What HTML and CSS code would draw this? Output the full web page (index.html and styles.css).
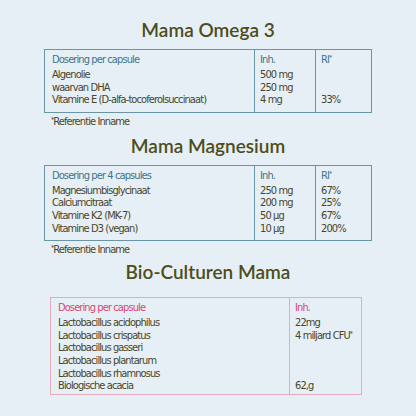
FILE: index.html
```html
<!DOCTYPE html>
<html lang="nl">
<head>
<meta charset="utf-8">
<link rel="stylesheet" href="styles.css">
</head>
<body>
<main class="page">
  <section class="block">
    <h2 class="title t1">Mama Omega 3</h2>
    <table class="facts blue w1">
      <colgroup><col class="k1"><col class="k2"><col></colgroup>
      <tr class="head"><td>Dosering per capsule</td><td>Inh.</td><td>RI<sup>*</sup></td></tr>
      <tr class="first"><td>Algenolie</td><td>500 mg</td><td></td></tr>
      <tr><td>waarvan DHA</td><td>250 mg</td><td></td></tr>
      <tr class="last"><td>Vitamine E (D-alfa-tocoferolsuccinaat)</td><td>4 mg</td><td>33%</td></tr>
    </table>
    <p class="note"><sup>*</sup>Referentie Inname</p>
  </section>
  <section class="block">
    <h2 class="title t2">Mama Magnesium</h2>
    <table class="facts blue w1">
      <colgroup><col class="k1"><col class="k2"><col></colgroup>
      <tr class="head"><td>Dosering per 4 capsules</td><td>Inh.</td><td>RI<sup>*</sup></td></tr>
      <tr class="first"><td>Magnesiumbisglycinaat</td><td>250 mg</td><td>67%</td></tr>
      <tr><td>Calciumcitraat</td><td>200 mg</td><td>25%</td></tr>
      <tr><td>Vitamine K2 (MK-7)</td><td>50 µg</td><td>67%</td></tr>
      <tr class="last"><td>Vitamine D3 (vegan)</td><td>10 µg</td><td>200%</td></tr>
    </table>
    <p class="note"><sup>*</sup>Referentie Inname</p>
  </section>
  <section class="block">
    <h2 class="title t3">Bio-Culturen Mama</h2>
    <table class="facts pink w3">
      <colgroup><col class="k3"><col></colgroup>
      <tr class="head"><td>Dosering per capsule</td><td>Inh.</td></tr>
      <tr class="first"><td>Lactobacillus acidophilus</td><td>22mg</td></tr>
      <tr><td>Lactobacillus crispatus</td><td>4 miljard CFU<sup>*</sup></td></tr>
      <tr><td>Lactobacillus gasseri</td><td></td></tr>
      <tr><td>Lactobacillus plantarum</td><td></td></tr>
      <tr><td>Lactobacillus rhamnosus</td><td></td></tr>
      <tr class="last"><td>Biologische acacia</td><td>62,g</td></tr>
    </table>
  </section>
</main>
</body>
</html>
```
FILE: styles.css
```css
html, body {
  margin: 0;
  padding: 0;
}
body {
  width: 416px;
  height: 416px;
  overflow: hidden;
  background: #e6eff6;
}
.page {
  display: flex;
  flex-direction: column;
}
.block {
  display: flex;
  flex-direction: column;
}
.title {
  margin: 0;
  text-align: center;
  font-family: "Lato", "Open Sans", sans-serif;
  font-weight: 600;
  font-size: 19px;
  line-height: 20px;
  color: #4d4d1c;
}
.t1 { margin-top: 20px; margin-bottom: 9px; }
.t2 { margin-top: 8px; margin-bottom: 9px; }
.t3 { margin-top: 6px; margin-bottom: 15px; }

.facts {
  border-collapse: collapse;
  font-family: "Liberation Sans Narrow", "DejaVu Sans Condensed", sans-serif;
  font-stretch: condensed;
  font-size: 11px;
  letter-spacing: -0.9px;
  color: #48452a;
  table-layout: fixed;
}
.w1 { margin-left: 44px; width: 328px; }
.w3 { margin-left: 50px; width: 312px; }
.k1 { width: 210px; }
.k2 { width: 61px; }
.k3 { width: 239px; }
.blue { border: 1px solid #6a95a6; }
.blue td { border-left: 1px solid #6a95a6; }
.pink { border: 1px solid #e7a9bb; }
.pink td { border-left: 1px solid #e7a9bb; }
.facts td {
  padding: 0 5px;
  line-height: 12.6px;
  vertical-align: top;
  white-space: nowrap;
  overflow: hidden;
}
.facts td:first-child { padding-left: 7px; }
.facts .head td {
  padding-top: 4px;
  line-height: 12px;
}
.blue .head td { color: #3f7488; }
.pink .head td { color: #d9476f; }
.facts .first td { padding-top: 3px; }
.facts .last td { padding-bottom: 5px; }
.pink .last td { padding-bottom: 1px; }
sup {
  font-size: 7px;
  line-height: 0;
  vertical-align: 3px;
}
.note {
  margin: 3px 0 0 51px;
  font-family: "Liberation Sans Narrow", "DejaVu Sans Condensed", sans-serif;
  font-size: 11px;
  letter-spacing: -0.9px;
  line-height: 12px;
  color: #48452a;
}
```
